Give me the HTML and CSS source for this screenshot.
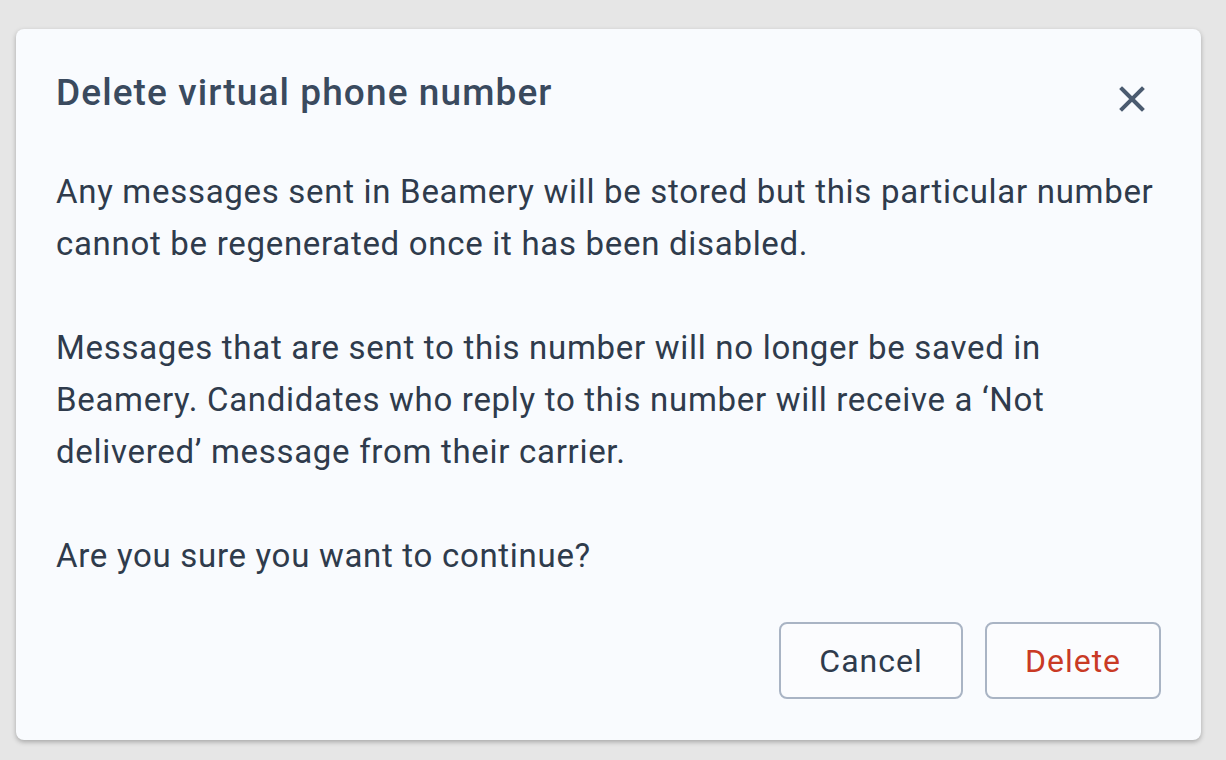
FILE: index.html
```html
<!DOCTYPE html>
<html lang="en">
<head>
<meta charset="utf-8">
<title>Delete virtual phone number</title>
<link rel="stylesheet" href="styles.css">
</head>
<body>
<div class="modal" role="dialog" aria-labelledby="modal-title">
  <div class="modal-header">
    <h2 class="modal-title" id="modal-title">Delete virtual phone number</h2>
    <button class="close-btn" aria-label="Close">
      <svg width="26" height="26" viewBox="0 0 26 26"><path d="M3 3 L23 23 M23 3 L3 23" stroke="#4b5b70" stroke-width="4" stroke-linecap="square" fill="none"/></svg>
    </button>
  </div>
  <div class="modal-body">
    <p>Any messages sent in Beamery will be stored but this particular number cannot be regenerated once it has been disabled.</p>
    <p>Messages that are sent to this number will no longer be saved in Beamery. Candidates who reply to this number will receive a ‘Not delivered’ message from their carrier.</p>
    <p>Are you sure you want to continue?</p>
  </div>
  <div class="modal-footer">
    <button class="btn btn-cancel">Cancel</button>
    <button class="btn btn-delete">Delete</button>
  </div>
</div>
</body>
</html>
```
FILE: styles.css
```css
html, body {
  margin: 0;
  padding: 0;
}
body {
  background: #e6e6e6;
  font-family: Roboto, "Liberation Sans", sans-serif;
  width: 1226px;
  height: 760px;
  overflow: hidden;
}
.modal {
  box-sizing: border-box;
  margin: 29px 25px 0 16px;
  width: 1185px;
  height: 711px;
  background: #f9fbfe;
  border-radius: 8px;
  box-shadow: 0 2px 5px rgba(0, 0, 0, 0.28);
  padding: 0 40px;
  display: flex;
  flex-direction: column;
}
.modal-header {
  display: flex;
  justify-content: space-between;
  align-items: flex-start;
  padding-top: 40px;
}
.modal-title {
  margin: 0;
  font-size: 37px;
  letter-spacing: 1.1px;
  line-height: 48px;
  font-weight: 500;
  color: #3a4a5e;
}
.close-btn {
  background: none;
  border: none;
  padding: 0;
  margin: 17px 16px 0 0;
  width: 26px;
  height: 26px;
  display: flex;
  cursor: pointer;
}
.modal-body {
  margin-top: 49px;
  color: #2f3b4c;
  font-size: 33px;
  letter-spacing: 0.7px;
  line-height: 52px;
}
.modal-body p {
  margin: 0 0 52px 0;
}
.modal-body p:last-child {
  margin-bottom: 0;
}
.modal-footer {
  display: flex;
  justify-content: flex-end;
  gap: 22px;
  margin-top: 40px;
}
.btn {
  box-sizing: border-box;
  height: 77px;
  border: 2px solid #a9b4c4;
  border-radius: 8px;
  background: #fbfcfe;
  font-family: Roboto, "Liberation Sans", sans-serif;
  font-size: 32px;
  letter-spacing: 1px;
  padding: 0;
  cursor: pointer;
}
.btn-cancel {
  color: #2f3b4c;
  width: 184px;
}
.btn-delete {
  color: #c93a25;
  width: 176px;
}
```
